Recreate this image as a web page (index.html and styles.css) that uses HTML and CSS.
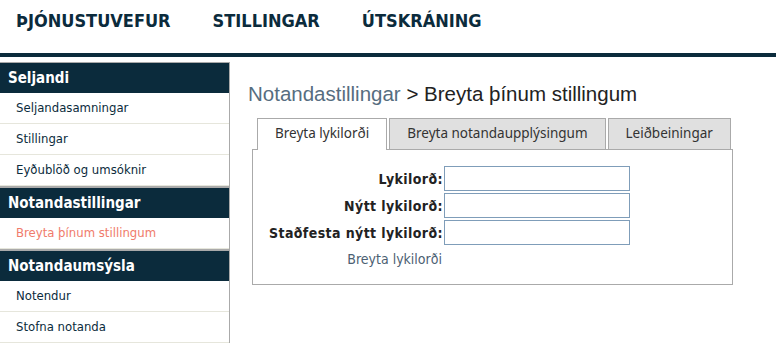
FILE: index.html
```html
<!DOCTYPE html>
<html lang="is">
<head>
    <meta charset="UTF-8">
    <meta name="viewport" content="width=device-width, initial-scale=1.0">
    <title>Þjónustuvefur - Stillingar</title>
    <link rel="stylesheet" href="styles.css">
</head>
<body>
    <!-- Top navigation -->
    <header class="topbar">
        <nav class="topnav">
            <a href="#" class="topnav-link">ÞJÓNUSTUVEFUR</a>
            <a href="#" class="topnav-link">STILLINGAR</a>
            <a href="#" class="topnav-link">ÚTSKRÁNING</a>
        </nav>
    </header>

    <div class="layout">
        <!-- Sidebar menu -->
        <aside class="sidebar">
            <section class="side-group">
                <h2 class="side-title">Seljandi</h2>
                <ul class="side-list">
                    <li><a href="#">Seljandasamningar</a></li>
                    <li><a href="#">Stillingar</a></li>
                    <li><a href="#">Eyðublöð og umsóknir</a></li>
                </ul>
            </section>
            <section class="side-group">
                <h2 class="side-title">Notandastillingar</h2>
                <ul class="side-list">
                    <li><a href="#" class="active">Breyta þínum stillingum</a></li>
                </ul>
            </section>
            <section class="side-group">
                <h2 class="side-title">Notandaumsýsla</h2>
                <ul class="side-list">
                    <li><a href="#">Notendur</a></li>
                    <li><a href="#">Stofna notanda</a></li>
                </ul>
            </section>
        </aside>

        <!-- Main content -->
        <main class="content">
            <h1 class="page-title"><span class="crumb">Notandastillingar</span> &gt; Breyta þínum stillingum</h1>

            <div class="tabs">
                <a href="#" class="tab tab-active">Breyta lykilorði</a>
                <a href="#" class="tab">Breyta notandaupplýsingum</a>
                <a href="#" class="tab">Leiðbeiningar</a>
            </div>
            <div class="tab-panel">
                <form class="pw-form">
                    <div class="form-row">
                        <label for="pw">Lykilorð:</label>
                        <input type="password" id="pw">
                    </div>
                    <div class="form-row">
                        <label for="pw-new">Nýtt lykilorð:</label>
                        <input type="password" id="pw-new">
                    </div>
                    <div class="form-row">
                        <label for="pw-confirm">Staðfesta nýtt lykilorð:</label>
                        <input type="password" id="pw-confirm">
                    </div>
                    <div class="form-row form-actions">
                        <a href="#" class="submit-link">Breyta lykilorði</a>
                        <span class="spacer"></span>
                    </div>
                </form>
            </div>
        </main>
    </div>
</body>
</html>
```

FILE: styles.css
```css
:root {
    --navy: #0b2b3c;
    --line: #aaaaaa;
    --soft-line: #e6e6dc;
    --accent: #f07b6b;
}

* {
    margin: 0;
    padding: 0;
    box-sizing: border-box;
}

body {
    font-family: "DejaVu Sans Condensed", "DejaVu Sans", sans-serif;
    color: var(--navy);
    background: #fff;
    overflow: hidden;
}

a {
    text-decoration: none;
    color: inherit;
}

/* Top navigation */
.topbar {
    height: 57px;
    border-bottom: 4px solid var(--navy);
}

.topnav {
    display: flex;
    gap: 42px;
    padding: 10px 0 0 16px;
}

.topnav-link {
    font-weight: bold;
    font-size: 18px;
    line-height: 22px;
    color: var(--navy);
}

/* Layout */
.layout {
    display: flex;
    margin-top: 5px;
}

/* Sidebar */
.sidebar {
    width: 230px;
    flex-shrink: 0;
}

.side-group {
    border: 1px solid var(--line);
    border-left: none;
}

.side-title {
    background: var(--navy);
    color: #fff;
    font-size: 15px;
    font-weight: bold;
    height: 30px;
    line-height: 30px;
    padding-left: 8px;
}

.side-list {
    list-style: none;
}

.side-list li {
    border-bottom: 1px solid var(--soft-line);
}

.side-list a {
    display: block;
    height: 30px;
    line-height: 30px;
    padding-left: 16px;
    font-size: 13px;
    color: var(--navy);
}

.side-list a.active {
    color: var(--accent);
}

/* Content */
.content {
    flex: 1;
    padding: 20px 0 0 22px;
}

.page-title {
    font-family: "Liberation Sans", Arial, sans-serif;
    font-weight: normal;
    font-size: 20.5px;
    line-height: 24px;
    color: #222;
    margin-left: -4px;
    margin-bottom: 12px;
}

.crumb {
    color: #566d80;
}

/* Tabs */
.tabs {
    display: flex;
    gap: 2px;
    padding-left: 5px;
}

.tab {
    flex-shrink: 0;
    white-space: nowrap;
    font-family: "Noto Sans", "Open Sans", sans-serif;
    font-size: 13.5px;
    color: #333;
    height: 31px;
    line-height: 29px;
    padding: 0 17px;
    background: #e0e0e0;
    border: 1px solid var(--line);
    border-bottom: none;
    margin-bottom: -1px;
}

.tab-active {
    background: #fff;
    height: 32px;
}

.tab-panel {
    width: 481px;
    height: 136px;
    border: 1px solid var(--line);
    padding: 16px 0 0 16px;
}

/* Password form */
.pw-form {
    display: grid;
    grid-template-columns: max-content;
    gap: 2px;
}

.form-row {
    display: flex;
    align-items: center;
    justify-content: flex-end;
    gap: 1px;
}

.form-row label {
    font-weight: bold;
    font-size: 14px;
    letter-spacing: 0.4px;
    color: #222;
}

.form-row input {
    width: 186px;
    height: 25px;
    border: 1px solid #7f9db9;
    font: inherit;
}

.form-actions {
    margin-top: 4px;
}

.submit-link {
    font-size: 14px;
    color: #4c6072;
}

.spacer {
    width: 187px;
}
```
